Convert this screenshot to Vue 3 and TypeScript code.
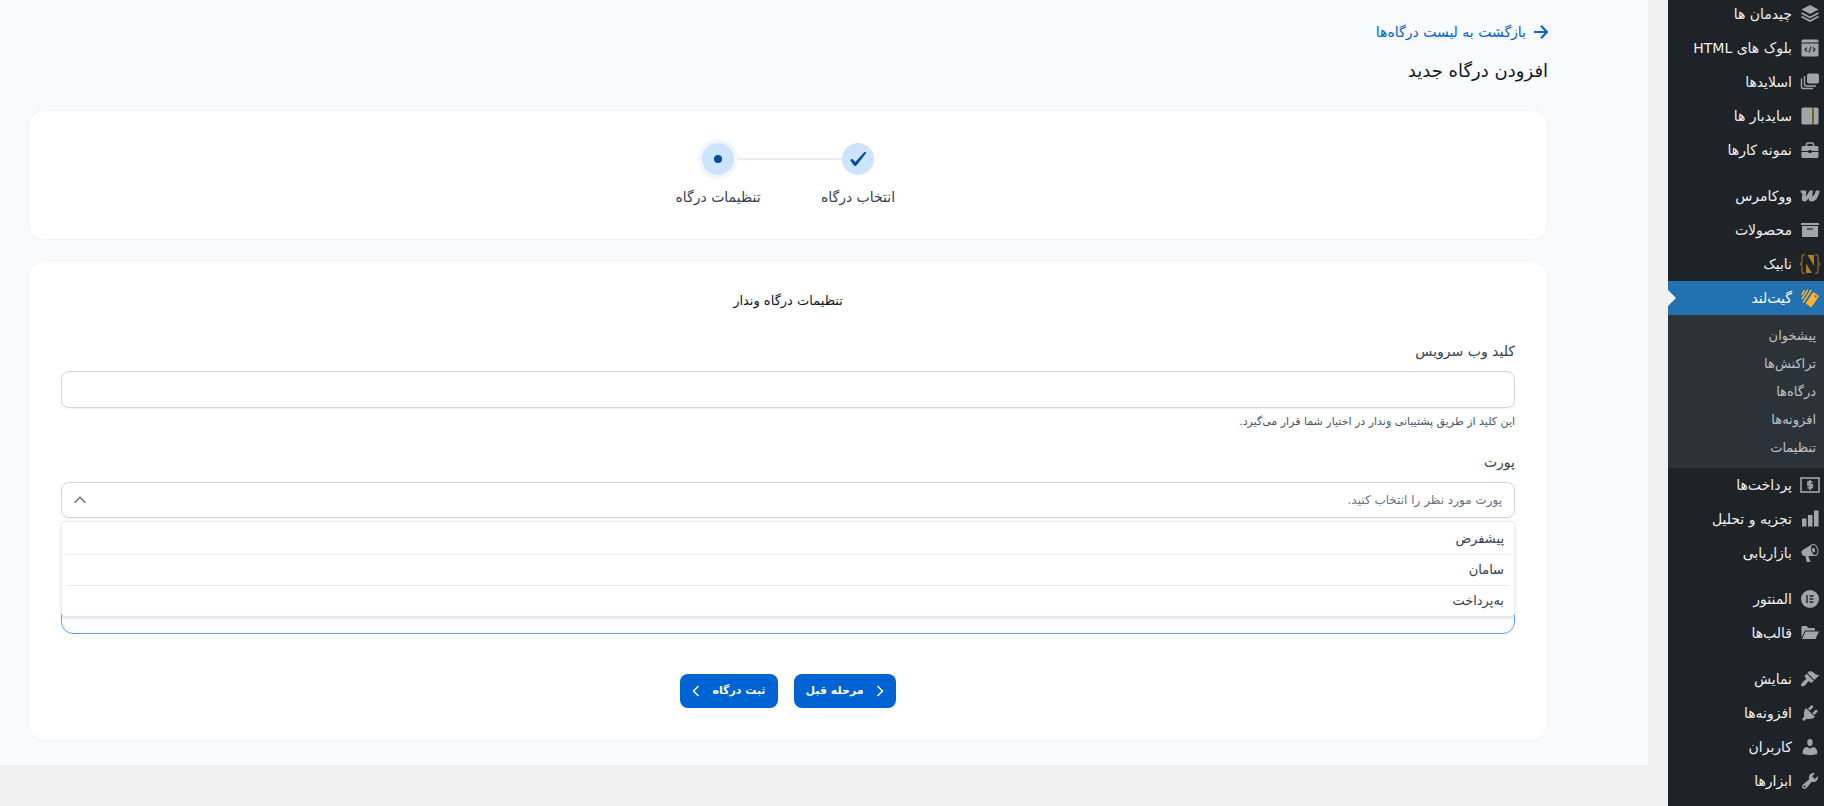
<script setup lang="ts">
import { ref } from 'vue'

interface MenuItem {
  icon: string
  label: string
  gap?: boolean
  active?: boolean
}

const menu: MenuItem[] = [
  { icon: 'layers', label: 'چیدمان ها' },
  { icon: 'html', label: 'بلوک های HTML' },
  { icon: 'slides', label: 'اسلایدها' },
  { icon: 'sidebar', label: 'سایدبار ها' },
  { icon: 'portfolio', label: 'نمونه کارها' },
  { icon: 'woo', label: 'ووکامرس', gap: true },
  { icon: 'archive', label: 'محصولات' },
  { icon: 'nabik', label: 'نابیک' },
  { icon: 'gateland', label: 'گیت‌لند', active: true },
  { icon: 'money', label: 'پرداخت‌ها' },
  { icon: 'chart', label: 'تجزیه و تحلیل' },
  { icon: 'megaphone', label: 'بازاریابی' },
  { icon: 'elementor', label: 'المنتور', gap: true },
  { icon: 'folder', label: 'قالب‌ها' },
  { icon: 'brush', label: 'نمایش', gap: true },
  { icon: 'plug', label: 'افزونه‌ها' },
  { icon: 'user', label: 'کاربران' },
  { icon: 'wrench', label: 'ابزارها' },
]

const submenu: string[] = ['پیشخوان', 'تراکنش‌ها', 'درگاه‌ها', 'افزونه‌ها', 'تنظیمات']
const ports: string[] = ['پیشفرض', 'سامان', 'به‌پرداخت']

const apiKey = ref('')
const port = ref('')
const open = ref(true)

function choose(value: string): void {
  port.value = value
  open.value = false
}
</script>

<template>
  <div class="page" dir="rtl">
    <nav class="sidebar" aria-label="منو">
      <ul class="menu">
        <li v-for="item in menu" :key="item.label" :class="{ gap: item.gap, active: item.active }">
          <a href="#" class="menu-link">
            <svg class="menu-icon" viewBox="0 0 20 20" aria-hidden="true">
              <g v-if="item.icon === 'layers'">
                <path d="M10 1 18.500 5.500 10 10 1.500 5.500z" />
                <path d="M1.500 9 10 13.500 18.500 9M1.500 12.500 10 17l8.500-4.500" fill="none" stroke="currentColor" stroke-width="1.800" />
              </g>
              <g v-else-if="item.icon === 'html'">
                <path d="M3 1.500h14A1.500 1.500 0 0 1 18.500 3v1.500h-17V3A1.500 1.500 0 0 1 3 1.500zM1.500 5.500h17V17a1.500 1.500 0 0 1-1.500 1.500H3A1.500 1.500 0 0 1 1.500 17z" />
                <path d="M7 9.500 5 11.500l2 2M13 9.500l2 2-2 2M11 8.500l-2 6" fill="none" stroke="#1d2327" stroke-width="1.100" />
              </g>
              <g v-else-if="item.icon === 'slides'">
                <rect x="7" y="1.500" width="12" height="10" rx="2" />
                <path d="M4.500 4v8.500a1.500 1.500 0 0 0 1.500 1.500H16M1.500 6.500V15A1.500 1.500 0 0 0 3 16.500h10" fill="none" stroke="currentColor" stroke-width="1.400" />
              </g>
              <g v-else-if="item.icon === 'sidebar'">
                <path d="M3 1.500h9v17H3A1.500 1.500 0 0 1 1.500 17V3A1.500 1.500 0 0 1 3 1.500zM13.500 1.500H17A1.500 1.500 0 0 1 18.500 3v14a1.500 1.500 0 0 1-1.500 1.500h-3.500z" />
                <path d="M12.700 1.500v17" stroke="#8a6a1c" stroke-width="0.900" />
              </g>
              <g v-else-if="item.icon === 'portfolio'">
                <path d="M6.500 6V4.500A1.500 1.500 0 0 1 8 3h4a1.500 1.500 0 0 1 1.500 1.500V6" fill="none" stroke="currentColor" stroke-width="1.500" />
                <path d="M3 6h14a1.500 1.500 0 0 1 1.500 1.500V11h-7v-1h-3v1h-7V7.500A1.500 1.500 0 0 1 3 6zM1.500 12h7v1h3v-1h7v4.500A1.500 1.500 0 0 1 17 18H3a1.500 1.500 0 0 1-1.500-1.500z" />
              </g>
              <path
                v-else-if="item.icon === 'woo'"
                d="M.3 4.500H6.300L5.800 10.800 9.800 4.500h3.200l-.8 6.200q2.600-1.200 3.700-6.200h3.800q-1.700 10.500-8.200 11-3 0-3-3.500-1.800 3.500-4.200 3.500-2.800 0-2.400-4L2.500 7.600Q.8 7.600.3 4.500z"
              />
              <g v-else-if="item.icon === 'archive'">
                <path d="M1 3h18v2H1zM2 6h16v11H2z" />
                <path d="M7 9h6" stroke="#1d2327" stroke-width="1.200" />
              </g>
              <g v-else-if="item.icon === 'nabik'" fill="#b07d26">
                <path d="M5 .6H4Q2 .6 2 3V7.500Q2 9.800-.2 10 2 10.200 2 12.500V17q0 2.400 2 2.400H5M15 .6h1q2 0 2 2.400V7.500q0 2.300 2.200 2.500Q18 10.200 18 12.500V17q0 2.400-2 2.400H15" fill="none" stroke="#8f6823" stroke-width="1.300" />
                <path d="M6 9.500V19h6zM7.500 1H14v11z" />
              </g>
              <g v-else-if="item.icon === 'gateland'" fill="#fbb130">
                <path d="M14 4.500 18.500 7.400a.9.900 0 0 1 .3 1.200L12 18.600a1 1 0 0 1-1.400.3L6.400 16a1 1 0 0 1-.2-1.400l6.500-9.800a1 1 0 0 1 1.300-.3z" />
                <path d="M3.500 14 11 2.500M2.300 10.500 7.600 2.200M2 6.500 4.400 2.700" stroke="#fbb130" stroke-width="1.500" stroke-linecap="round" />
                <circle cx="15.500" cy="8.200" r="1" fill="#2271b1" />
              </g>
              <g v-else-if="item.icon === 'money'">
                <rect x="1" y="3" width="18" height="14" fill="none" stroke="currentColor" stroke-width="1.600" />
                <path d="M12.500 7.200H8v2.700h4.200v2.800H7.500M10 5v10" fill="none" stroke="currentColor" stroke-width="1.700" />
              </g>
              <path v-else-if="item.icon === 'chart'" d="M14 1.500h4.500v16H14zM8 6h4.500v11.500H8zM2 9.500h4.500v8H2z" />
              <path
                v-else-if="item.icon === 'megaphone'"
                d="M18.150 5.940c.46 1.620.38 3.220-.02 4.480-.42 1.280-1.260 2.180-2.300 2.480-.16.06-.26.06-.4.060-.06.020-.12.020-.18.020-.06.020-.14.020-.22.020h-6.800l2.220 5.500c.02.140-.06.260-.14.340-.08.1-.24.160-.34.160H6.950c-.1 0-.26-.06-.34-.16-.08-.08-.16-.2-.14-.34l-1-5.500H4.250l-.02-.02c-.5.060-1.080-.18-1.540-.62s-.88-1.080-1.060-1.880c-.24-.8-.2-1.560-.02-2.200.18-.62.580-1.080 1.060-1.300l.02-.02 9-5.400c.1-.06.180-.1.240-.16.060-.04.140-.08.240-.12.160-.08.280-.12.5-.18 1.040-.3 2.240.1 3.220.98s1.840 2.240 2.260 3.860zm-2.580 5.980h-.02c.4-.1.740-.34 1.040-.7.580-.7.860-1.760.86-3.040 0-.64-.1-1.300-.28-1.980-.34-1.360-1.020-2.500-1.780-3.240s-1.680-1.100-2.460-.88c-.82.220-1.400.960-1.700 2-.32 1.040-.28 2.360.06 3.720.38 1.360 1 2.500 1.800 3.240.78.740 1.620 1.100 2.480.88zm-2.540-7.080c.22-.04.420-.02.620.04.380.16.760.48 1.020 1s.42 1.200.42 1.780c0 .3-.04.560-.12.8-.18.480-.44.840-.86.940-.34.1-.8-.06-1.140-.4s-.64-.86-.78-1.500c-.18-.62-.12-1.240.02-1.720s.48-.84.820-.94z"
              />
              <g v-else-if="item.icon === 'elementor'">
                <circle cx="10" cy="10" r="9" />
                <path d="M7 6v8M9.500 7h4M9.500 10h4M9.500 13h4" stroke="#1d2327" stroke-width="1.400" />
              </g>
              <path v-else-if="item.icon === 'folder'" d="M1.500 14.500V4a1 1 0 0 1 1-1h4l2 2H14a1 1 0 0 1 1 1v1.500H5zM2 16 5.500 8.500h13.500L15.500 16z" />
              <path
                v-else-if="item.icon === 'brush'"
                d="M14.480 11.060 7.410 3.990l1.500-1.500c.5-.56 2.300-.47 3.510.32 1.210.8 1.430 1.280 2.910 2.100 1.180.64 2.450 1.260 4.450.85zm-.71.71L6.700 4.700 4.930 6.470c-.39.390-.39 1.020 0 1.410l1.060 1.060c.39.390.39 1.030 0 1.420-.6.600-1.430 1.110-2.210 1.690-.35.260-.7.530-1.010.84C1.430 14.230.4 16.080 1.400 17.070c.99 1 2.840-.03 4.180-1.360.31-.31.580-.66.850-1.020.57-.78 1.080-1.610 1.690-2.210.39-.39 1.020-.39 1.410 0l1.060 1.060c.39.390 1.020.390 1.410 0z"
              />
              <path
                v-else-if="item.icon === 'plug'"
                d="M13.110 4.360 9.870 7.600 8 5.730l3.240-3.240c.35-.34 1.050-.2 1.560.32.520.51.660 1.210.31 1.550zm-8 1.770.91-1.120 9.010 9.010-1.190.84c-.71.710-2.630 1.160-3.820 1.160H6.140L4.900 17.260c-.59.590-1.540.590-2.120 0-.59-.58-.59-1.530 0-2.120l1.240-1.240v-3.880c0-1.130.4-3.190 1.090-3.890zm7.260 3.970 3.240-3.240c.34-.35 1.040-.21 1.550.31.520.51.660 1.210.31 1.550l-3.240 3.250z"
              />
              <path
                v-else-if="item.icon === 'user'"
                d="M10 9.250c-2.270 0-2.730-3.440-2.730-3.440C7 4.020 7.820 2 9.970 2c2.160 0 2.980 2.020 2.710 3.810 0 0-.41 3.440-2.680 3.440zm0 2.570L12.720 10c2.390 0 4.520 2.330 4.520 4.530v2.490s-3.650 1.130-7.240 1.130c-3.650 0-7.240-1.130-7.240-1.130v-2.490c0-2.250 1.940-4.480 4.470-4.480z"
              />
              <path
                v-else
                d="M16.680 9.770c-1.340 1.340-3.300 1.670-4.950.99l-5.410 6.520c-.99.990-2.590.990-3.580 0s-.99-2.590 0-3.570l6.520-5.420c-.68-1.650-.35-3.610.99-4.950 1.280-1.280 3.120-1.620 4.720-1.060l-2.890 2.890 2.820 2.820 2.860-2.870c.53 1.580.18 3.390-1.080 4.650zM3.810 16.210c.4.390 1.040.390 1.430 0 .4-.4.4-1.040 0-1.430-.39-.4-1.030-.4-1.430 0-.39.390-.39 1.030 0 1.430z"
              />
            </svg>
            <span>{{ item.label }}</span>
          </a>
          <ul v-if="item.active" class="submenu">
            <li v-for="sub in submenu" :key="sub">
              <a href="#">{{ sub }}</a>
            </li>
          </ul>
        </li>
      </ul>
    </nav>

    <main class="content">
      <a href="#" class="back">
        <svg viewBox="0 0 14 14" aria-hidden="true"><path d="M0 7h13M7 .8 13 7 7 13.200" /></svg>
        <span>بازگشت به لیست درگاه‌ها</span>
      </a>
      <h1>افزودن درگاه جدید</h1>

      <section class="card">
        <ol class="steps">
          <li>
            <span class="node">
              <svg viewBox="0 0 18 16" aria-hidden="true">
                <path d="M1.300 9.300Q2.500 7.300 4.200 8.700L6.300 11 15.300 1.300Q17 .6 17.200 2L8 13.700Q6.300 15.900 4.700 14.200z" />
              </svg>
            </span>
            <span>انتخاب درگاه</span>
          </li>
          <li>
            <span class="node current"><i class="dot"></i></span>
            <span>تنظیمات درگاه</span>
          </li>
        </ol>
      </section>

      <form class="card settings" @submit.prevent>
        <h2>تنظیمات درگاه وندار</h2>

        <label for="api-key">کلید وب سرویس</label>
        <input id="api-key" v-model="apiKey" type="text" class="control" />
        <p class="help">این کلید از طریق پشتیبانی وندار در اختیار شما قرار می‌گیرد.</p>

        <label for="port">پورت</label>
        <div class="picker">
          <select id="port" v-model="port" class="control" @mousedown.prevent="open = !open">
            <option value="" disabled>پورت مورد نظر را انتخاب کنید.</option>
            <option v-for="name in ports" :key="name" :value="name">{{ name }}</option>
          </select>
          <svg class="chevron" viewBox="0 0 12 8" aria-hidden="true"><path d="M.5 6.800 6 1.300l5.500 5.500" /></svg>
          <ul v-if="open" class="options">
            <li v-for="name in ports" :key="name">
              <button type="button" @click="choose(name)">{{ name }}</button>
            </li>
          </ul>
        </div>
        <div class="notice"></div>

        <div class="actions">
          <button type="button" class="primary">
            <svg viewBox="0 0 8 12" aria-hidden="true"><path d="M1.500 1 6.500 6l-5 5" /></svg>
            <span>مرحله قبل</span>
          </button>
          <button type="submit" class="primary">
            <span>ثبت درگاه</span>
            <svg viewBox="0 0 8 12" aria-hidden="true"><path d="M6.500 1 1.500 6l5 5" /></svg>
          </button>
        </div>
      </form>
    </main>
  </div>
</template>

<style>
body {
  margin: 0;
  background: #f0f0f0;
}
</style>

<style scoped>
.page {
  display: flex;
  align-items: flex-start;
  gap: 20px;
  height: 100vh;
  overflow: hidden;
  background: #f0f0f0;
  font-family: 'DejaVu Sans', 'Noto Sans', sans-serif;
  font-size: 14px;
  line-height: 20px;
}

.page *,
.page *::before,
.page *::after {
  box-sizing: border-box;
}

ul,
ol {
  list-style: none;
  margin: 0;
  padding: 0;
}

a {
  text-decoration: none;
}

button,
input,
select {
  font: inherit;
}

/* Sidebar */
.sidebar {
  flex: none;
  width: 156px;
  min-height: 100vh;
  background: #1d2327;
}

.menu {
  margin-top: -3px;
}

.menu .gap {
  margin-top: 12px;
}

.menu-link {
  position: relative;
  display: flex;
  align-items: center;
  gap: 8px;
  height: 34px;
  padding-right: 4px;
  color: #f0f0f1;
  white-space: nowrap;
}

.menu-icon {
  width: 20px;
  height: 20px;
  flex: none;
  overflow: visible;
  color: #a0a5aa;
  fill: currentColor;
}

.active > .menu-link {
  background: #2271b1;
  color: #fff;
}

.active > .menu-link::after {
  content: '';
  position: absolute;
  left: 0;
  top: 9px;
  border: 8px solid transparent;
  border-right-width: 0;
  border-left-color: #f0f0f0;
}

.submenu {
  padding: 7px 0 6px;
  background: #2c3338;
}

.submenu a {
  display: block;
  height: 28px;
  padding-right: 8px;
  color: #bec1c4;
  font-size: 13px;
  line-height: 28px;
}

/* Content */
.content {
  flex: 1;
  min-width: 0;
  padding: 22px 100px 24px 28px;
  background: #f9fafc;
}

.back {
  display: flex;
  align-items: center;
  gap: 8px;
  width: fit-content;
  color: #0063d3;
}

.back svg {
  width: 14px;
  height: 14px;
  fill: none;
  stroke: currentColor;
  stroke-width: 2;
}

h1 {
  margin: 14px 0 24px;
  color: #101828;
  font-size: 18px;
  font-weight: 400;
  line-height: 30px;
}

.card {
  border: 1px solid #f1f3f6;
  border-radius: 16px;
  background: #fff;
}

.steps {
  display: flex;
  justify-content: center;
  padding: 32px 0;
}

.steps li {
  position: relative;
  display: flex;
  flex-direction: column;
  align-items: center;
  gap: 12px;
  width: 140px;
  color: #344054;
}

.steps li + li::before {
  content: '';
  position: absolute;
  top: 15px;
  right: -54px;
  width: 104px;
  height: 2px;
  background: #eaecf0;
}

.node {
  display: flex;
  align-items: center;
  justify-content: center;
  width: 32px;
  height: 32px;
  border-radius: 50%;
  background: #cce4ff;
}

.node svg {
  width: 18px;
  height: 16px;
  fill: #004a9f;
}

.current {
  box-shadow: 0 0 0 4px #f0f7ff;
}

.dot {
  width: 8px;
  height: 8px;
  border-radius: 50%;
  background: #004a9f;
}

.settings {
  display: flex;
  flex-direction: column;
  margin-top: 20px;
  padding: 30px 32px 32px;
}

h2 {
  margin: 0 0 30px;
  color: #101828;
  font-size: 13px;
  font-weight: 400;
  line-height: 20px;
  text-align: center;
}

label {
  margin-bottom: 10px;
  color: #344054;
}

.control {
  display: block;
  width: 100%;
  height: 37px;
  padding: 0 12px;
  border: 1px solid #d0d5dd;
  border-radius: 8px;
  background: #fff;
  box-shadow: 0 1px 2px rgba(16, 24, 40, 0.05);
  color: #344054;
  appearance: none;
}

select.control {
  height: 36px;
  color: #667085;
  font-size: 12px;
}

.help {
  margin: 4px 0 20px;
  color: #475467;
  font-size: 11px;
}

.picker {
  position: relative;
}

.chevron {
  position: absolute;
  left: 13px;
  top: 14px;
  width: 12px;
  height: 8px;
  fill: none;
  stroke: #667085;
  stroke-width: 1.5;
  pointer-events: none;
}

.options {
  position: absolute;
  z-index: 1;
  top: 39px;
  left: 0;
  right: 0;
  padding: 2px 4px 0;
  border: 1px solid #eaecf0;
  border-radius: 4px;
  background: #fff;
  box-shadow: 0 1px 3px rgba(16, 24, 40, 0.15);
}

.options li + li {
  border-top: 1px solid #eaecf0;
}

.options button {
  display: block;
  width: 100%;
  height: 30px;
  padding: 0 6px;
  border: 0;
  background: none;
  color: #344054;
  font-size: 13px;
  text-align: right;
}

.notice {
  height: 94px;
  margin-top: 22px;
  border: 1px solid #53a6fb;
  border-radius: 12px;
  background: #fafcff;
}

.actions {
  display: flex;
  justify-content: center;
  gap: 16px;
  margin-top: 40px;
}

.primary {
  display: flex;
  align-items: center;
  justify-content: center;
  gap: 12px;
  height: 34px;
  padding: 0 12px;
  border: 0;
  border-radius: 8px;
  background: #0063d3;
  color: #fff;
  font-size: 11px;
  font-weight: 700;
}

.primary svg {
  width: 8px;
  height: 12px;
  fill: none;
  stroke: currentColor;
  stroke-width: 1.5;
}
</style>
